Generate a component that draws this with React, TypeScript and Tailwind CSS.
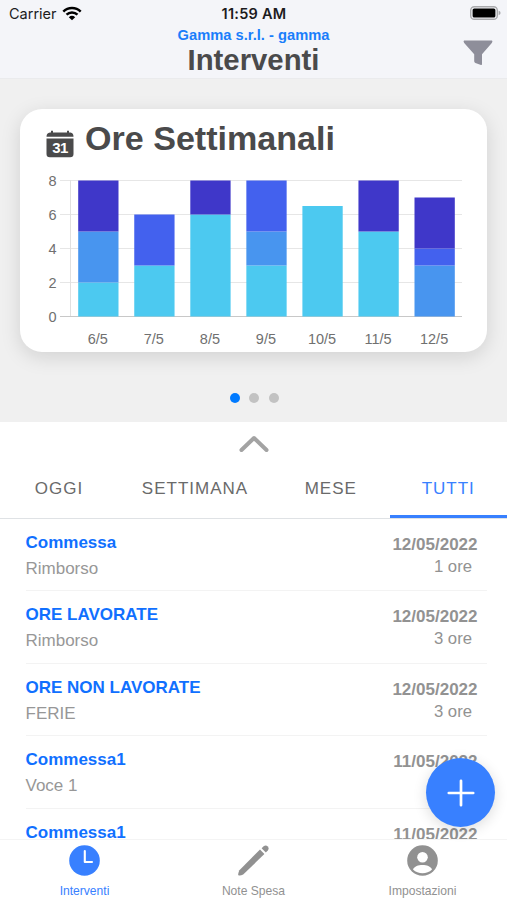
const days = [
  { label: "6/5", hours: [2, 3, 0, 3] },
  { label: "7/5", hours: [3, 0, 3, 0] },
  { label: "8/5", hours: [6, 0, 0, 2] },
  { label: "9/5", hours: [3, 2, 3, 0] },
  { label: "10/5", hours: [6.5, 0, 0, 0] },
  { label: "11/5", hours: [5, 0, 0, 3] },
  { label: "12/5", hours: [0, 3, 1, 3] },
];

const barColors = ["#4cc9f0", "#4895ef", "#4361ee", "#3f37c9"];

const entries = [
  { title: "Commessa", subtitle: "Rimborso", date: "12/05/2022", hours: "1 ore" },
  { title: "ORE LAVORATE", subtitle: "Rimborso", date: "12/05/2022", hours: "3 ore" },
  { title: "ORE NON LAVORATE", subtitle: "FERIE", date: "12/05/2022", hours: "3 ore" },
  { title: "Commessa1", subtitle: "Voce 1", date: "11/05/2022", hours: "" },
  { title: "Commessa1", subtitle: "", date: "11/05/2022", hours: "" },
];

const Header = () => (
  <header className="h-[78.5px] shrink-0 border-b border-[#eaebed] bg-[#f4f5f9]">
    <div className="grid h-[27px] grid-cols-3 items-center pl-[9px] pr-[6px] font-['Inter',sans-serif] text-[15px] text-[#1c1c1e]">
      <div className="flex items-center gap-[5px]">
        <span className="text-[14.5px]">Carrier</span>
        <svg width="20" height="15" viewBox="0 0 20 15" className="mb-px">
          <path
            d="M1.3 5.6 A12.4 12.4 0 0 1 18.7 5.6 M4.5 8.6 A8 8 0 0 1 15.5 8.6"
            fill="none"
            stroke="#000"
            strokeWidth="2.5"
          />
          <path d="M10 14.2 L6.8 11.2 A4.8 4.8 0 0 1 13.2 11.2 Z" fill="#000" />
        </svg>
      </div>
      <span className="-ml-[2px] whitespace-nowrap text-center text-[14.5px] font-semibold tracking-[0.25px]">11:59 AM</span>
      <svg width="31" height="14" viewBox="0 0 31 14" className="mb-px justify-self-end">
        <rect x="0.7" y="0.7" width="26.6" height="12.6" rx="3.6" fill="#f4f5f9" stroke="#a9aaad" strokeWidth="1.4" />
        <rect x="2.6" y="2.4" width="22.8" height="9.2" rx="1.6" fill="#000" />
        <path d="M28.6 4.8 Q30.6 5.4 30.6 7 Q30.6 8.6 28.6 9.2 Z" fill="#a9aaad" />
      </svg>
    </div>
    <div className="grid grid-cols-[1fr_auto_1fr]">
      <div />
      <div className="text-center font-bold">
        <div className="h-[16px] text-[14.7px] leading-[16px] text-[#1a7efb]">Gamma s.r.l. - gamma</div>
        <h1 className="text-[29.3px] leading-[34px] text-[#4a4a4b]">Interventi</h1>
      </div>
      <svg width="30" height="26" viewBox="0 0 30 26" className="mr-[14px] mt-[13px] justify-self-end" fill="#8e8e9a">
        <path d="M1 0.6 H29 Q30 1.6 28.8 3 L19 14.2 V24.2 Q19 25.2 18 25 L12.4 23 Q11.2 22.4 11.2 21.2 V14.2 L1.2 3 Q0 1.6 1 0.6 Z" />
      </svg>
    </div>
  </header>
);

const HoursChart = () => {
  const zeroY = 143.5;
  const unit = 17;
  return (
    <svg width="420" height="178" viewBox="0 0 420 178" fontSize="14.5" fill="#707070">
      {[0, 2, 4, 6, 8].map((value) => (
        <g key={value}>
          <text x="10.5" y={zeroY - value * unit + 5.5} textAnchor="end">
            {value}
          </text>
          <line
            x1="14"
            x2="416"
            y1={zeroY - value * unit}
            y2={zeroY - value * unit}
            stroke={value === 0 ? "#c8c8c8" : "#e6e6e6"}
          />
        </g>
      ))}
      <line x1="24.5" x2="24.5" y1="7" y2="143" stroke="#e0e0e0" />
      {days.map((day, i) => {
        let total = 0;
        const x = 32.2 + i * 56.05;
        return (
          <g key={day.label}>
            {day.hours.map((h, k) => {
              total += h;
              return (
                <rect key={k} x={x} y={zeroY - total * unit} width="40.3" height={h * unit} fill={barColors[k]} />
              );
            })}
            <text x={x + 19.6} y="171" textAnchor="middle">
              {day.label}
            </text>
          </g>
        );
      })}
    </svg>
  );
};

const ChartCard = () => (
  <section className="flex h-[343px] shrink-0 flex-col items-center bg-[#f0f0f0] pt-[30px]">
    <div className="h-[243.5px] w-[467px] rounded-[22px] bg-white pl-[26px] shadow-[0_5px_20px_rgba(0,0,0,0.13)]">
      <div className="flex h-[64.5px] items-start">
        <svg width="28" height="28" viewBox="0 0 28 28" className="mt-[21px]">
          <path
            d="M4 2.6 H5 V0.8 H7 V2.6 H21 V0.8 H23 V2.6 H24.5 Q27.5 3.2 27.5 6.8 H0.5 Q0.5 3.2 4 2.6 Z M0.5 8.4 H27.5 V24 Q27.5 27.3 24.2 27.3 H3.8 Q0.5 27.3 0.5 24 Z"
            fill="#4a4a4b"
          />
          <text x="14" y="23" textAnchor="middle" fontSize="15" fontWeight="700" fill="#fff" letterSpacing="-0.5">
            31
          </text>
        </svg>
        <h2 className="ml-[11px] mt-[9px] text-[34.1px] font-bold leading-[40px] text-[#4a4a4b]">Ore Settimanali</h2>
      </div>
      <HoursChart />
    </div>
    <div className="mt-[41px] flex gap-[9.5px] pl-px">
      <span className="size-[10px] rounded-full bg-[#007aff]" />
      <span className="size-[10px] rounded-full bg-[#c2c2c2]" />
      <span className="size-[10px] rounded-full bg-[#c2c2c2]" />
    </div>
  </section>
);

const Tabs = () => (
  <nav className="grid h-[54px] shrink-0 grid-cols-[118px_154px_117.5px_117.5px] border-b border-[#dfe2e5] text-center text-[17px] leading-[47px] tracking-[1px] text-[#6a6a6a]">
    <span>OGGI</span>
    <span>SETTIMANA</span>
    <span>MESE</span>
    <span className="h-[53px] border-b-[3px] border-[#3880ff] text-[#3880ff]">TUTTI</span>
  </nav>
);

const TabBar = () => (
  <footer className="grid h-[61px] shrink-0 grid-cols-3 border-t border-[#f4f4f4] bg-white text-center text-[12.1px] text-[#919191]">
    <div className="flex flex-col items-center pt-[5px] text-[#3880ff]">
      <svg width="31" height="31" viewBox="0 0 31 31">
        <circle cx="15.5" cy="15.5" r="15.3" fill="#3880ff" />
        <path d="M15.8 6 V17 H23" fill="none" stroke="#fff" strokeWidth="2.1" strokeLinecap="round" strokeLinejoin="round" />
      </svg>
      <span className="mt-[7px] leading-4">Interventi</span>
    </div>
    <div className="flex flex-col items-center pt-[5px]">
      <svg width="31" height="31" viewBox="0 0 31 31" fill="#919191">
        <path d="M22 4.6 L26.4 9 L5.2 29.6 Q1.8 31.2 0.4 30.2 Q-0.4 28.8 1.4 25.2 Z" />
        <path d="M23.6 3.2 L25.6 1.2 Q28 -0.4 29.8 1.6 Q31.4 3.6 29.8 5.6 L27.8 7.5 Z" />
      </svg>
      <span className="mt-[7px] leading-4">Note Spesa</span>
    </div>
    <div className="flex flex-col items-center pt-[5px]">
      <svg width="31" height="31" viewBox="0 0 31 31">
        <circle cx="15.5" cy="15.5" r="15.3" fill="#919191" />
        <circle cx="15.5" cy="12.2" r="5.3" fill="#fff" />
        <path d="M6 24.4 C8.5 18.6 22.5 18.6 25 24.4 C20 29.5 11 29.5 6 24.4 Z" fill="#fff" />
      </svg>
      <span className="mt-[7px] leading-4">Impostazioni</span>
    </div>
  </footer>
);

const App = () => (
  <div className="relative flex h-[900px] w-[507px] flex-col overflow-hidden bg-white font-['Liberation_Sans',Arial,sans-serif]">
    <Header />
    <ChartCard />
    <div className="flex h-[43px] shrink-0 justify-center pl-px pt-[13px]">
      <svg width="30" height="18" viewBox="0 0 30 18" fill="none" stroke="#a3a3a3" strokeWidth="4">
        <path d="M2.5 15 L15 3 L27.5 15" strokeLinecap="round" strokeLinejoin="round" />
      </svg>
    </div>
    <Tabs />
    <main className="min-h-0 flex-1 overflow-hidden">
      {entries.map((entry, i) => (
        <div key={i} className="ml-[25.5px] mr-[20px] flex h-[72.5px] justify-between border-b border-[#f3f3f3] pr-[9.5px] text-[17px]">
          <div className="pt-[11px]">
            <div className="font-bold leading-[26px] text-[#1070ff]">{entry.title}</div>
            <div className="leading-[26px] text-[#979797]">{entry.subtitle}</div>
          </div>
          <div className="pt-[14px] text-right text-[#929292]">
            <div className="font-bold leading-[24px]">{entry.date}</div>
            <div className="pr-[5.5px] text-[16.7px] leading-[20px]">{entry.hours}</div>
          </div>
        </div>
      ))}
    </main>
    <TabBar />
    {/* Floating add button */}
    <button className="absolute left-[426px] top-[758px] flex size-[69px] items-center justify-center rounded-full bg-[#3880ff] shadow-[0_3px_14px_rgba(0,0,0,0.14)]">
      <svg width="28" height="28" viewBox="0 0 28 28" stroke="#fff" strokeWidth="2.7" strokeLinecap="round">
        <path d="M14 1.8 V26.2 M1.8 14 H26.2" />
      </svg>
    </button>
  </div>
);

export default App;
